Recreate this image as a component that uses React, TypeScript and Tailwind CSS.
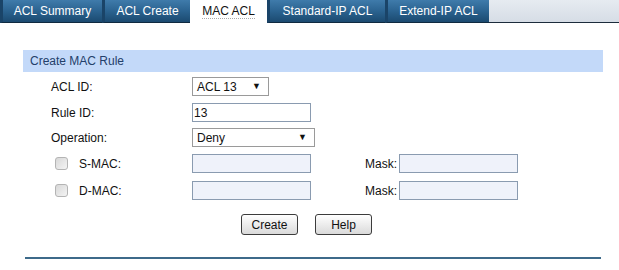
import React from "react";

const tabs = [
  { label: "ACL Summary", w: 102, active: false },
  { label: "ACL Create", w: 88, active: false },
  { label: "MAC ACL", w: 77, active: true },
  { label: "Standard-IP ACL", w: 118, active: false },
  { label: "Extend-IP ACL", w: 104, active: false },
];

function Tab({ label, w, active }: { label: string; w: number; active: boolean }) {
  if (active) {
    return (
      <div
        className="h-[23px] bg-white flex items-center justify-center text-[#111] shrink-0"
        style={{ width: w }}
      >
        <span className="leading-[14px] border-b border-dotted border-[#aaa]">{label}</span>
      </div>
    );
  }
  return (
    <div
      className="h-[23px] flex items-center justify-center text-white shrink-0 border-b border-[#0f2a40] border-l-[3px] border-l-[#1a4468] bg-gradient-to-b from-[#3f7bab] via-[#2b6390] to-[#1b4a70]"
      style={{ width: w }}
    >
      <span className="-mt-[1px]">{label}</span>
    </div>
  );
}

function Select({ text, w }: { text: string; w: number }) {
  return (
    <div
      className="h-[19px] border border-[#9a9a9a] bg-white flex items-center justify-between pl-[4px] pr-[7px]"
      style={{ width: w }}
    >
      <span>{text}</span>
      <span className="text-[9px] leading-none">▼</span>
    </div>
  );
}

function Input({ w, value, disabled }: { w: number; value?: string; disabled?: boolean }) {
  return (
    <div
      className={
        "h-[19px] border border-[#8a9bb0] flex items-center pl-[1px] " +
        (disabled ? "bg-[#eff2fa]" : "bg-white")
      }
      style={{ width: w }}
    >
      {value}
    </div>
  );
}

function Checkbox() {
  return (
    <div className="w-[13px] h-[13px] rounded-[3px] border border-[#b4b4b4] bg-gradient-to-br from-[#d8d8d8] to-[#f4f4f4]" />
  );
}

function Button({ label }: { label: string }) {
  return (
    <div className="w-[57px] h-[21px] rounded-[3px] border border-[#3c3c3c] bg-gradient-to-b from-white to-[#dadada] flex items-center justify-center text-[#111]">
      {label}
    </div>
  );
}

export default function App() {
  return (
    <div
      className="w-[619px] h-[270px] bg-white text-[12px] text-[#111] overflow-hidden"
      style={{ fontFamily: '"Liberation Sans", Arial, sans-serif' }}
    >
      <div className="flex h-[23px]">
        {tabs.map((t) => (
          <Tab key={t.label} {...t} />
        ))}
        <div className="flex-1 h-[23px] bg-gradient-to-b from-[#e6ebf1] to-[#d6dde6] border-b border-[#1c2c3c]" />
      </div>

      <div className="ml-[23px] w-[580px] mt-[27px]">
        <div className="h-[22px] bg-[#c3d9f9] flex items-center pl-[7px] text-[#23406a]">
          Create MAC Rule
        </div>

        <div className="flex items-center h-[19px] mt-[5px]">
          <div className="w-[169px] pl-[28px]">ACL ID:</div>
          <Select text="ACL 13" w={77} />
        </div>

        <div className="flex items-center h-[19px] mt-[7px]">
          <div className="w-[169px] pl-[28px]">Rule ID:</div>
          <Input w={119} value="13" />
        </div>

        <div className="flex items-center h-[19px] mt-[6px]">
          <div className="w-[169px] pl-[28px]">Operation:</div>
          <Select text="Deny" w={123} />
        </div>

        <div className="flex items-center h-[19px] mt-[7px]">
          <div className="w-[169px] pl-[32px] flex items-center">
            <Checkbox />
            <span className="ml-[11px]">S-MAC:</span>
          </div>
          <Input w={119} disabled />
          <div className="ml-[54px] w-[34px]">Mask:</div>
          <Input w={119} disabled />
        </div>

        <div className="flex items-center h-[19px] mt-[8px]">
          <div className="w-[169px] pl-[32px] flex items-center">
            <Checkbox />
            <span className="ml-[11px]">D-MAC:</span>
          </div>
          <Input w={119} disabled />
          <div className="ml-[54px] w-[34px]">Mask:</div>
          <Input w={119} disabled />
        </div>

        <div className="flex mt-[14px] pl-[218px] gap-[17px]">
          <Button label="Create" />
          <Button label="Help" />
        </div>

        <div className="mt-[22px] mx-[2px] h-[2px] bg-[#3d6a8a]" />
      </div>
    </div>
  );
}
